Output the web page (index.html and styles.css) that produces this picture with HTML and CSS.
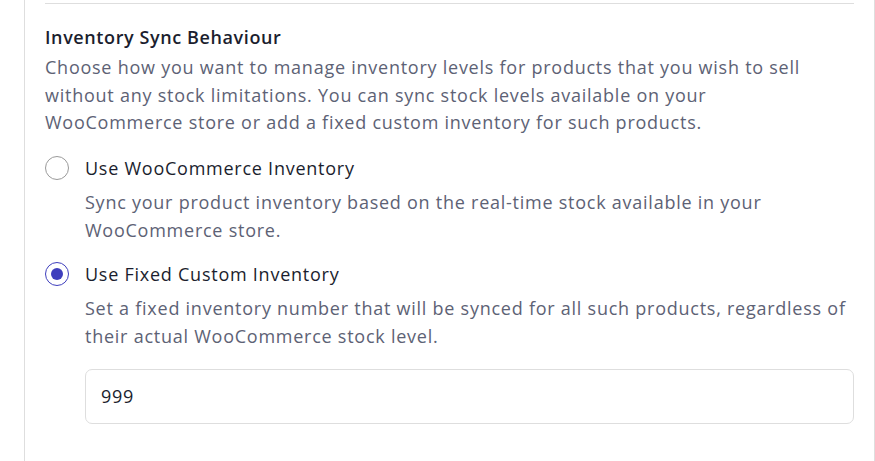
FILE: index.html
```html
<!DOCTYPE html>
<html lang="en">
<head>
<meta charset="utf-8">
<title>Inventory Sync Behaviour</title>
<link rel="stylesheet" href="styles.css">
</head>
<body>
<div class="card">
  <div class="divider"></div>
  <section class="setting">
    <h3 class="setting-title">Inventory Sync Behaviour</h3>
    <p class="setting-desc">Choose how you want to manage inventory levels for products that you wish to sell without any stock limitations. You can sync stock levels available on your WooCommerce store or add a fixed custom inventory for such products.</p>
    <div class="options">
      <label class="option">
        <span class="radio"></span>
        <span class="option-body">
          <span class="option-label">Use WooCommerce Inventory</span>
          <span class="option-help">Sync your product inventory based on the real-time stock available in your WooCommerce store.</span>
        </span>
      </label>
      <label class="option">
        <span class="radio checked"></span>
        <span class="option-body">
          <span class="option-label">Use Fixed Custom Inventory</span>
          <span class="option-help">Set a fixed inventory number that will be synced for all such products, regardless of their actual WooCommerce stock level.</span>
          <span class="input-field">999</span>
        </span>
      </label>
    </div>
  </section>
</div>
</body>
</html>
```
FILE: styles.css
```css
html, body {
  margin: 0;
  padding: 0;
  background: #ffffff;
}
body {
  font-family: "Open Sans", "Noto Sans", sans-serif;
  color: #1d2030;
  letter-spacing: 0.75px;
}
.card {
  margin-left: 24px;
  width: 851px;
  height: 461px;
  border-left: 1px solid #dedede;
  border-right: 1px solid #dedede;
  padding: 3px 20px 0 20px;
  box-sizing: border-box;
}
.divider {
  border-top: 1px solid #dedede;
}
.setting {
  padding-top: 19px;
}
.setting-title {
  margin: 0;
  font-size: 18px;
  font-weight: 600;
  line-height: 28px;
  letter-spacing: 0.6px;
  color: #1b1e2e;
}
.setting-desc {
  margin: 3px 0 0 0;
  max-width: 790px;
  font-size: 18px;
  line-height: 27.5px;
  color: #5d6275;
}
.options {
  display: flex;
  flex-direction: column;
  gap: 16px;
  margin-top: 18px;
}
.option {
  display: flex;
  gap: 16px;
  align-items: flex-start;
}
.radio {
  flex: none;
  width: 24px;
  height: 24px;
  box-sizing: border-box;
  border-radius: 50%;
  border: 1.5px solid #9a9a9a;
  margin-top: 1px;
  display: flex;
  align-items: center;
  justify-content: center;
}
.radio.checked {
  border-color: #3e3ebd;
}
.radio.checked::after {
  content: "";
  width: 12px;
  height: 12px;
  border-radius: 50%;
  background: #3e3ebd;
}
.option-body {
  display: flex;
  flex-direction: column;
  flex: 1;
}
.option-label {
  font-size: 18px;
  line-height: 26px;
  color: #1b1e2e;
}
.option-help {
  margin-top: 7px;
  font-size: 18px;
  line-height: 28.5px;
  color: #5d6275;
}
.input-field {
  margin-top: 18px;
  height: 55px;
  box-sizing: border-box;
  border: 1px solid #dedede;
  border-radius: 7px;
  padding: 0 15px;
  display: flex;
  align-items: center;
  font-size: 18px;
  color: #1b1e2e;
}
```
